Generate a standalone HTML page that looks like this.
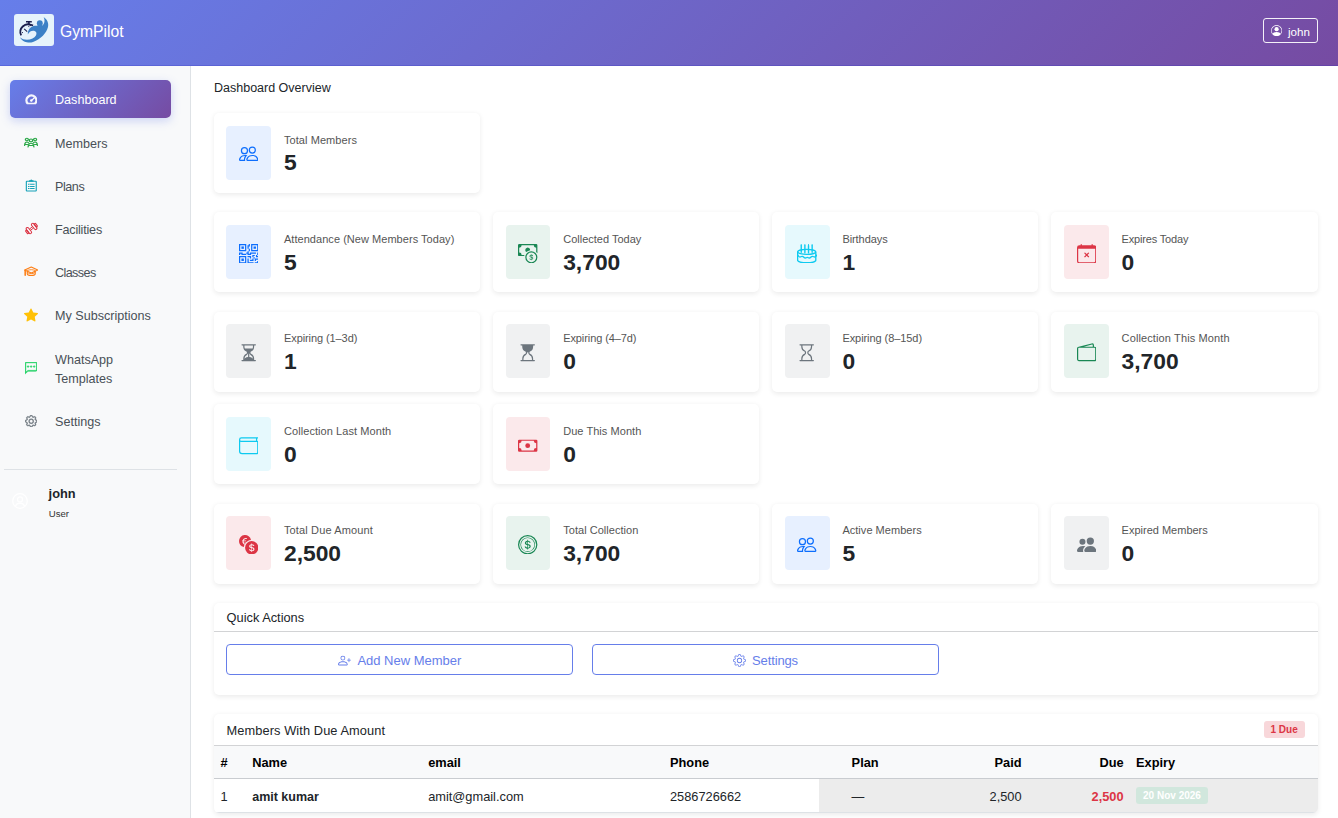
<!DOCTYPE html>
<html lang="en">
<head>
<meta charset="utf-8">
<title>GymPilot</title>
<style>
*{box-sizing:border-box;margin:0;padding:0}
html,body{width:1338px;height:818px;overflow:hidden;background:#fff}
body{font-family:"Liberation Sans",sans-serif;color:#212529;position:relative;font-size:12.8px}
svg{display:block}
.abs{position:absolute}
/* header */
#hdr{position:absolute;left:0;top:0;width:1338px;height:66px;background:linear-gradient(135deg,#667eea 0%,#764ba2 100%);box-shadow:inset 0 -1px 0 rgba(40,40,190,.22)}
#logo{position:absolute;left:14px;top:14px;width:40px;height:32px;border-radius:3px;background:#e6f3fb;overflow:hidden}
#brand{position:absolute;left:60px;top:22px;font-size:15.7px;line-height:20px;color:#fff;white-space:nowrap}
#ubtn{position:absolute;left:1263px;top:18px;width:55px;height:25px;border:1px solid rgba(255,255,255,.92);border-radius:3px;color:#fff}
#ubtn svg{position:absolute;left:7px;top:6px}
#ubtn span{position:absolute;left:24px;top:5.6px;font-size:11.6px;line-height:13px}
/* sidebar */
#side{position:absolute;left:0;top:66px;width:191px;height:752px;background:#f8f9fa;border-right:1px solid #dee2e6}
.nav{position:absolute;left:10px;width:161px;height:38px;border-radius:5px;color:#495057;font-size:12.6px}
.nav svg{position:absolute;left:14.2px;top:12.4px}
.nav span{position:absolute;left:45px;top:12.4px;line-height:16px;white-space:nowrap}
.nav.on{background:linear-gradient(135deg,#667eea 0%,#764ba2 100%);color:#fff;box-shadow:0 3px 10px rgba(102,126,234,.3)}
#sdiv{position:absolute;left:4px;top:469px;width:173px;height:1px;background:#dee2e6}
/* main */
#title{position:absolute;left:214px;top:80px;font-size:12.5px;line-height:16px;white-space:nowrap}
.card{position:absolute;background:#fff;border-radius:5px;box-shadow:0 1.6px 4.8px rgba(0,0,0,.08)}
.stat{width:266.4px;height:80px}
.ib{position:absolute;left:12.8px;top:12.8px;width:44.8px;height:54px;border-radius:4px}
.ib svg{position:absolute;left:12.7px;top:18.5px}
.lb{position:absolute;left:70.4px;top:20px;font-size:11px;line-height:14px;color:#555;white-space:nowrap}
.vl{position:absolute;left:70.4px;top:36.6px;font-size:22.8px;line-height:27px;font-weight:700;color:#212529;white-space:nowrap}
.c1{left:213.6px}.c2{left:492.8px}.c3{left:772px}.c4{left:1051.2px}
.r1{top:113.2px}.r2{top:212.4px}.r3{top:311.6px}.r4{top:404.4px}.r5{top:503.6px}
.bg-b{background:#e7f0ff;color:#0d6efd}
.bg-g{background:#e8f3ee;color:#198754}
.bg-c{background:#e6f9fd;color:#0dcaf0}
.bg-r{background:#fbe9eb;color:#dc3545}
.bg-s{background:#f0f1f2;color:#6c757d}

/* quick actions */
#qa{left:213.6px;top:603.2px;width:1104.4px;height:91.8px}
.ch{position:absolute;left:0;top:0;right:0;height:28.6px;border-bottom:1px solid #d2d3d5;font-size:12.8px;line-height:16px}
.ch span{position:absolute;left:13px;top:7px;white-space:nowrap}
.obtn{position:absolute;top:41px;width:347px;height:31px;border:1px solid #667eea;border-radius:4px;color:#667eea;font-size:13px}
.obtn .in{position:absolute;top:7.7px;height:16px;line-height:16px;white-space:nowrap;display:flex;align-items:center}
/* members due */
#md{left:213.6px;top:714px;width:1104.4px;height:99px;overflow:hidden}
#md .ch{height:31.6px}
#md .ch span{top:9px}
#badge{position:absolute;left:1050px;top:7px;width:41px;height:17px;border-radius:3px;background:#f8d7da;color:#dc3545;font-size:10px;font-weight:700;line-height:17px;text-align:center}
#thead{position:absolute;left:0;top:31.6px;width:100%;height:33px;background:#f8f9fa;border-bottom:1px solid #c9ccd0}
#trow{position:absolute;left:0;top:64.6px;width:100%;height:34px;border-bottom:1px solid #dee2e6}
#trow .gb{position:absolute;left:605px;top:0;right:0;height:33.6px;background:#ececec}
.th,.td{position:absolute;line-height:16px;white-space:nowrap;font-size:12.8px}
.th{top:9px;font-weight:700;color:#000}
.td{top:10.4px}
/* sidebar user */
#su-n{position:absolute;left:48.6px;top:420px;font-size:12.8px;font-weight:700;line-height:16px;color:#212529}
#su-r{position:absolute;left:48.8px;top:442px;font-size:9.6px;line-height:12px;color:#333}
.r1 .vl{top:35.6px}.r3 .lb,.r5 .lb{top:19px}
</style>
</head>
<body>
<div id="hdr">
  <div id="logo"><svg viewBox="0 0 40 32" width="40" height="32"><g fill="none" stroke="#1b1f4d" stroke-linecap="butt"><path d="M7.200 21.300A7.500 7.500 0 0 1 17.600 11.400" stroke-width="1.800"/><path d="M17.200 10.700l1.900.8" stroke-width="1.600"/><path d="M12 7.700h5.800" stroke-width="1.600"/><path d="M14.900 8v2.800" stroke-width="1.600"/><path d="M10.200 14.900l3 2.800" stroke-width="1.100"/><path d="M14.600 12.200l.5.900M8.100 18.400l.9.400" stroke-width="1"/></g><circle cx="25.800" cy="9.300" r="2.950" fill="#3b80c6"/><path fill="#3b80c6" d="M29.600 3C33 5.300 35 9 34 13 32.500 19 27 25 19 28 15 29.300 9 28.500 5.800 23.200 9 26 14 26.500 18.500 24.500 21.500 23 23 20.500 22.300 18.500 21.500 16.300 18 16.200 16.300 17.500 15 18.500 14.300 19.500 13.850 20.500 13.500 18 14.500 15 17 13.200 19 11.800 21 11.500 23 11.700L24.200 11 27.500 11 28.300 11.600C30.500 10 31.300 6.500 29.600 3Z"/></svg></div>
  <div id="brand">GymPilot</div>
  <div id="ubtn"><svg viewBox="0 0 16 16" width="11.2" height="11.2" fill="currentColor"><path d="M11 6a3 3 0 1 1-6 0 3 3 0 0 1 6 0"/><path fill-rule="evenodd" d="M0 8a8 8 0 1 1 16 0A8 8 0 0 1 0 8m8-7a7 7 0 0 0-5.468 11.370C3.242 11.226 4.805 10 8 10s4.757 1.225 5.468 2.370A7 7 0 0 0 8 1"/></svg><span>john</span></div>
</div>
<div id="side">
  <div class="nav on" style="top:14px"><svg viewBox="0 0 16 16" width="12.8" height="12.8" fill="currentColor" style="color:#fff;left:14.6px;top:12.8px"><path fill-rule="evenodd" opacity=".93" d="M2.280 14.200A7.600 7.600 0 1 1 13.720 14.200ZM4.380 12.300A4.700 4.700 0 1 1 11.620 12.300Z"/><circle cx="7.900" cy="9.500" r="1.550"/><path d="M7.900 9.500l3.300-2.900" stroke="currentColor" stroke-width="1.500" stroke-linecap="round"/></svg><span>Dashboard</span></div>
  <div class="nav" style="top:57.2px"><svg viewBox="0 0 16 16" width="14" height="14" fill="currentColor" style="color:#28a745;left:14.0px;top:12.2px"><g transform="translate(0 2.200) scale(1 .8)" fill="none" stroke="currentColor" stroke-width="1.45" stroke-linecap="round" stroke-linejoin="round"><circle cx="3.3" cy="3.6" r="1.700"/><circle cx="12.7" cy="3.6" r="1.700"/><circle cx="8" cy="5" r="1.900"/><path d="M4.700 14.300c.2-3.200 1.400-5.100 3.300-5.100s3.100 1.900 3.300 5.100M6.300 12.200h3.400"/><path d="M.7 12.300c.1-2.900 1-4.900 2.600-4.900 1 0 1.700.6 2.100 1.500M15.300 12.300c-.1-2.900-1-4.900-2.600-4.900-1 0-1.700.6-2.100 1.500M1.600 10.800h2.400M14.400 10.800h-2.400"/></g></svg><span>Members</span></div>
  <div class="nav" style="top:100.4px"><svg viewBox="0 0 16 16" width="12.6" height="12.6" fill="currentColor" style="color:#17a2b8;left:14.7px;top:12.9px"><g fill="none" stroke="currentColor" stroke-width="1.450" stroke-linejoin="miter"><rect x="1.700" y="2.800" width="12.600" height="12.500" rx=".7"/><path d="M5.200 3.600V1.500h1.600a1.250 1.250 0 0 1 2.400 0h1.600v2.100z" fill="currentColor" stroke="none"/><path d="M3.800 6.800h8.400M3.800 9.400h8.400M3.800 12h8.400" stroke-width="1.300"/><path d="M5.900 5.700v7.400" stroke="#f8f9fa" stroke-width=".7"/></g></svg><span style="letter-spacing:-.45px">Plans</span></div>
  <div class="nav" style="top:143.6px"><svg viewBox="0 0 16 16" width="13" height="13" fill="currentColor" style="color:#dc3545;left:14.5px;top:12.7px"><g transform="rotate(-38 8 8)" fill="none" stroke="currentColor" stroke-width="1.300"><rect x=".3" y="5.600" width="1.900" height="4.800" rx=".9"/><rect x="2.200" y="3.600" width="3.300" height="8.800" rx="1.600"/><rect x="10.500" y="3.600" width="3.300" height="8.800" rx="1.600"/><rect x="13.800" y="5.600" width="1.900" height="4.800" rx=".9"/><path d="M5.500 7h5M5.500 9h5" stroke-width="1.100"/></g></svg><span style="letter-spacing:-.2px">Facilities</span></div>
  <div class="nav" style="top:186.8px"><svg viewBox="0 0 16 16" width="14.5" height="14.5" fill="currentColor" style="color:#fd7e14;left:13.8px;top:11.9px"><g fill="none" stroke="currentColor" stroke-width="1.250" stroke-linejoin="round" stroke-linecap="round"><path d="M8 2.200 15.200 5.500 8 8.800.8 5.500z"/><path d="M4 5.900c1.200-.5 2.500-.7 4-.7s2.800.2 4 .7" stroke-width="1"/><path d="M4.200 8.600c1 .7 2.300 1 3.800 1s2.800-.3 3.800-1" stroke-width="1"/><path d="M3.600 7v2.700c0 1.100 2 1.900 4.400 1.900s4.400-.8 4.400-1.900V7"/><path d="M1.300 5.900v5.500" stroke-width="1.700"/></g></svg><span style="letter-spacing:-.6px">Classes</span></div>
  <div class="nav" style="top:230px"><svg viewBox="0 0 16 16" width="14" height="14" fill="currentColor" style="color:#ffc107;left:14.0px;top:12.2px"><path d="M3.612 15.443c-.386.198-.824-.149-.746-.592l.83-4.730L.173 6.765c-.329-.314-.158-.888.283-.950l4.898-.696L7.538.792c.197-.39.730-.39.927 0l2.184 4.327 4.898.696c.441.062.612.636.282.950l-3.522 3.356.83 4.730c.078.443-.36.790-.746.592L8 13.187l-4.389 2.256z"/></svg><span>My Subscriptions</span></div>
  <div class="nav" style="top:273.2px;height:57.6px"><svg viewBox="0 0 16 16" width="12.2" height="12.2" fill="currentColor" stroke="currentColor" stroke-width=".9" stroke-linejoin="round" style="color:#25d366;left:14.9px;top:23.3px"><path d="M14 1a1 1 0 0 1 1 1v8a1 1 0 0 1-1 1H4.414A2 2 0 0 0 3 11.586l-2 2V2a1 1 0 0 1 1-1zM2 0a2 2 0 0 0-2 2v12.793a.5.5 0 0 0 .854.353l2.853-2.853A1 1 0 0 1 4.414 12H14a2 2 0 0 0 2-2V2a2 2 0 0 0-2-2z"/><path d="M5 6a1 1 0 1 1-2 0 1 1 0 0 1 2 0m4 0a1 1 0 1 1-2 0 1 1 0 0 1 2 0m4 0a1 1 0 1 1-2 0 1 1 0 0 1 2 0"/></svg><span style="line-height:19.2px;top:12px">WhatsApp<br>Templates</span></div>
  <div class="nav" style="top:335.6px"><svg viewBox="0 0 16 16" width="12.4" height="12.4" fill="currentColor" stroke="currentColor" stroke-width=".55" style="color:#6c757d;left:14.8px;top:13.0px"><path d="M8 4.754a3.246 3.246 0 1 0 0 6.492 3.246 3.246 0 0 0 0-6.492M5.754 8a2.246 2.246 0 1 1 4.492 0 2.246 2.246 0 0 1-4.492 0"/><path d="M9.796 1.343c-.527-1.790-3.065-1.790-3.592 0l-.094.319a.873.873 0 0 1-1.255.520l-.292-.160c-1.640-.892-3.433.902-2.540 2.541l.159.292a.873.873 0 0 1-.520 1.255l-.319.094c-1.790.527-1.790 3.065 0 3.592l.319.094a.873.873 0 0 1 .520 1.255l-.160.292c-.892 1.640.901 3.434 2.541 2.540l.292-.159a.873.873 0 0 1 1.255.520l.094.319c.527 1.790 3.065 1.790 3.592 0l.094-.319a.873.873 0 0 1 1.255-.520l.292.160c1.640.893 3.434-.902 2.540-2.541l-.159-.292a.873.873 0 0 1 .520-1.255l.319-.094c1.790-.527 1.790-3.065 0-3.592l-.319-.094a.873.873 0 0 1-.520-1.255l.160-.292c.893-1.640-.902-3.433-2.541-2.540l-.292.159a.873.873 0 0 1-1.255-.520zm-2.633.283c.246-.835 1.428-.835 1.674 0l.094.319a1.873 1.873 0 0 0 2.693 1.115l.291-.160c.764-.415 1.600.420 1.184 1.185l-.159.292a1.873 1.873 0 0 0 1.116 2.692l.318.094c.835.246.835 1.428 0 1.674l-.319.094a1.873 1.873 0 0 0-1.115 2.693l.160.291c.415.764-.420 1.600-1.185 1.184l-.291-.159a1.873 1.873 0 0 0-2.693 1.116l-.094.318c-.246.835-1.428.835-1.674 0l-.094-.319a1.873 1.873 0 0 0-2.692-1.115l-.292.160c-.764.415-1.600-.420-1.184-1.185l.159-.291A1.873 1.873 0 0 0 1.945 8.930l-.319-.094c-.835-.246-.835-1.428 0-1.674l.319-.094A1.873 1.873 0 0 0 3.060 4.377l-.160-.292c-.415-.764.420-1.600 1.185-1.184l.292.159a1.873 1.873 0 0 0 2.692-1.115z"/></svg><span>Settings</span></div>
  <div id="sdiv" style="top:403px"></div>
  <div class="abs" style="left:12px;top:427px;color:#fff"><svg viewBox="0 0 16 16" width="16" height="16" fill="none" stroke="currentColor" stroke-width="1.3"><circle cx="8" cy="8" r="7.300"/><circle cx="8" cy="6.400" r="2.500"/><path d="M3.300 13.200c.9-2 2.600-3 4.700-3s3.800 1 4.700 3"/></svg></div>
  <div id="su-n">john</div>
  <div id="su-r">User</div>
</div>
<div id="title">Dashboard Overview</div>

<div class="card stat c1 r1"><div class="ib bg-b"><svg viewBox="0 0 16 16" width="19.4" height="19.4" fill="currentColor"><path d="M15 14s1 0 1-1-1-4-5-4-5 3-5 4 1 1 1 1zm-7.978-1L7 12.996c.001-.264.167-1.03.76-1.72C8.312 10.629 9.282 10 11 10c1.717 0 2.687.63 3.24 1.276.593.69.758 1.457.76 1.72l-.008.002-.014.002zM11 7a2 2 0 1 0 0-4 2 2 0 0 0 0 4m3-2a3 3 0 1 1-6 0 3 3 0 0 1 6 0M6.936 9.28a6 6 0 0 0-1.23-.247A7 7 0 0 0 5 9c-4 0-5 3-5 4q0 1 1 1h4.216A2.24 2.24 0 0 1 5 13c0-1.01.377-2.042 1.09-2.904.243-.294.526-.569.846-.816M4.92 10A5.5 5.5 0 0 0 4 13H1c0-.26.164-1.03.76-1.724.545-.636 1.492-1.256 3.16-1.275ZM1.5 5.5a3 3 0 1 1 6 0 3 3 0 0 1-6 0m3-2a2 2 0 1 0 0 4 2 2 0 0 0 0-4"/></svg></div><div class="lb" style="letter-spacing:0.07px">Total Members</div><div class="vl">5</div></div>

<div class="card stat c1 r2"><div class="ib bg-b"><svg viewBox="0 0 16 16" width="19.4" height="19.4" fill="currentColor"><path d="M2 2h2v2H2z"/><path d="M6 0v6H0V0zM5 1H1v4h4zM4 12H2v2h2z"/><path d="M6 10v6H0v-6zm-5 1v4h4v-4zm11-9h2v2h-2z"/><path d="M10 0v6h6V0zm5 1v4h-4V1zM8 1V0h1v2H8v2H7V1zm0 5V4h1v2zM6 8V7h1V6h1v2h1V7h5v1h-4v1H7V8zm0 0v1H2V8H1v1H0V7h3v1zm10 1h-1V7h1zm-1 0h-1v2h2v-1h-1zm-4 0h2v1h-1v1h-1zm2 3v-1h-1v1h-1v1H9v1h3v-2zm0 0h3v1h-2v1h-1zm-4-1v1h1v-2H7v1z"/><path d="M7 12h1v3h4v1H7zm9 2v2h-3v-1h2v-1z"/></svg></div><div class="lb" style="letter-spacing:0.04px">Attendance (New Members Today)</div><div class="vl">5</div></div>
<div class="card stat c2 r2"><div class="ib bg-g"><svg viewBox="0 0 16 16" width="19.4" height="19.4" fill="currentColor"><path fill-rule="evenodd" d="M11 15a4 4 0 1 0 0-8 4 4 0 0 0 0 8m5-4a5 5 0 1 1-10 0 5 5 0 0 1 10 0"/><path d="M9.438 11.944c.047.596.518 1.06 1.363 1.116v.44h.375v-.443c.875-.061 1.386-.529 1.386-1.207 0-.618-.39-.936-1.09-1.1l-.296-.07v-1.2c.376.043.614.248.671.532h.658c-.047-.575-.54-1.024-1.329-1.073V8.5h-.375v.45c-.747.073-1.255.522-1.255 1.158 0 .562.378.92 1.007 1.066l.248.061v1.272c-.384-.058-.639-.27-.696-.563h-.668zm1.36-1.354c-.369-.085-.569-.26-.569-.522 0-.294.216-.514.572-.578v1.1zm.432.746c.449.104.655.272.655.569 0 .339-.257.571-.709.614v-1.195z"/><path d="M1 0a1 1 0 0 0-1 1v8a1 1 0 0 0 1 1h4.083q.088-.517.258-1H3a2 2 0 0 0-2-2V3a2 2 0 0 0 2-2h10a2 2 0 0 0 2 2v3.528c.38.34.717.728 1 1.154V1a1 1 0 0 0-1-1z"/><path d="M9.998 5.083 10 5a2 2 0 1 0-3.132 1.65 6 6 0 0 1 3.13-1.567"/></svg></div><div class="lb">Collected Today</div><div class="vl">3,700</div></div>
<div class="card stat c3 r2"><div class="ib bg-c"><svg viewBox="0 0 16 16" width="19.4" height="19.4" fill="currentColor"><g fill="none" stroke="currentColor" stroke-width="1.100" stroke-linecap="round"><path d="M3.500 1.300v5.600M6.500 1.300v6M9.500 1.300v6M12.500 1.300v5.600" stroke-width="1.150"/><path d="M3.500 .3v1M6.500 .3v1M9.500 .3v1M12.500 .3v1" stroke-width=".7"/><ellipse cx="8" cy="6.500" rx="7.400" ry="2"/><path d="M.5 6.500v7c0 1.100 3.400 2 7.500 2s7.500-.9 7.500-2v-7"/><path d="M.5 9.100l.9 1.100c.5.500 1.200.600 1.800.3.800-.4 1.700-.3 2.300.3l.3.300c.5.500 1.300.600 1.900.200a1.500 1.500 0 0 1 1.600 0c.6.400 1.400.300 1.900-.2l.3-.3c.6-.6 1.500-.7 2.300-.3.600.3 1.300.2 1.800-.3l.9-1.100"/></g></svg></div><div class="lb" style="letter-spacing:-0.07px">Birthdays</div><div class="vl">1</div></div>
<div class="card stat c4 r2"><div class="ib bg-r"><svg viewBox="0 0 16 16" width="19.4" height="19.4" fill="currentColor"><path d="M6.146 7.146a.5.5 0 0 1 .708 0L8 8.293l1.146-1.147a.5.5 0 1 1 .708.708L8.707 9l1.147 1.146a.5.5 0 0 1-.708.708L8 9.707l-1.146 1.147a.5.5 0 0 1-.708-.708L7.293 9 6.146 7.854a.5.5 0 0 1 0-.708"/><path d="M3.5 0a.5.5 0 0 1 .5.5V1h8V.5a.5.5 0 0 1 1 0V1h1a2 2 0 0 1 2 2v11a2 2 0 0 1-2 2H2a2 2 0 0 1-2-2V3a2 2 0 0 1 2-2h1V.5a.5.5 0 0 1 .5-.5M1 4v10a1 1 0 0 0 1 1h12a1 1 0 0 0 1-1V4z"/></svg></div><div class="lb" style="letter-spacing:-0.17px">Expires Today</div><div class="vl">0</div></div>

<div class="card stat c1 r3"><div class="ib bg-s"><svg viewBox="0 0 16 16" width="19.4" height="19.4" fill="currentColor"><path d="M2.5 15a.5.5 0 1 1 0-1h1v-1a4.5 4.5 0 0 1 2.557-4.06c.29-.139.443-.377.443-.59v-.7c0-.213-.154-.451-.443-.59A4.5 4.5 0 0 1 3.5 3V2h-1a.5.5 0 0 1 0-1h11a.5.5 0 0 1 0 1h-1v1a4.5 4.5 0 0 1-2.557 4.06c-.29.139-.443.377-.443.59v.7c0 .213.154.451.443.59A4.5 4.5 0 0 1 12.5 13v1h1a.5.5 0 0 1 0 1zm2-13v1c0 .537.12 1.045.337 1.5h6.326c.216-.455.337-.963.337-1.5V2zm3 6.35c0 .701-.478 1.236-1.011 1.492A3.5 3.5 0 0 0 4.5 13s.866-1.299 3-1.48zm1 0v3.17c2.134.181 3 1.48 3 1.48a3.5 3.5 0 0 0-1.989-3.158C8.978 9.586 8.5 9.052 8.5 8.351z"/></svg></div><div class="lb" style="letter-spacing:-0.09px">Expiring (1–3d)</div><div class="vl">1</div></div>
<div class="card stat c2 r3"><div class="ib bg-s"><svg viewBox="0 0 16 16" width="19.4" height="19.4" fill="currentColor"><path d="M2 14.5a.5.5 0 0 0 .5.5h11a.5.5 0 1 0 0-1h-1v-1a4.5 4.5 0 0 0-2.557-4.06c-.29-.139-.443-.377-.443-.59v-.7c0-.213.154-.451.443-.59A4.5 4.5 0 0 0 12.5 3V2h1a.5.5 0 0 0 0-1h-11a.5.5 0 0 0 0 1h1v1a4.5 4.5 0 0 0 2.557 4.06c.29.139.443.377.443.59v.7c0 .213-.154.451-.443.59A4.5 4.5 0 0 0 3.5 13v1h-1a.5.5 0 0 0-.5.5m2.500-.5v-1a3.500 3.500 0 0 1 1.989-3.158c.533-.256 1.011-.79 1.011-1.491v-.702s.18.101.5.101.5-.1.500-.1v.7c0 .701.478 1.236 1.011 1.492A3.500 3.500 0 0 1 11.500 13v1z"/></svg></div><div class="lb" style="letter-spacing:-0.09px">Expiring (4–7d)</div><div class="vl">0</div></div>
<div class="card stat c3 r3"><div class="ib bg-s"><svg viewBox="0 0 16 16" width="19.4" height="19.4" fill="currentColor"><path d="M2 1.5a.5.5 0 0 1 .5-.5h11a.5.5 0 0 1 0 1h-1v1a4.5 4.5 0 0 1-2.557 4.06c-.29.139-.443.377-.443.59v.7c0 .213.154.451.443.59A4.5 4.5 0 0 1 12.5 13v1h1a.5.5 0 0 1 0 1h-11a.5.5 0 1 1 0-1h1v-1a4.5 4.5 0 0 1 2.557-4.06c.29-.139.443-.377.443-.59v-.7c0-.213-.154-.451-.443-.59A4.5 4.5 0 0 1 3.5 3V2h-1a.5.5 0 0 1-.5-.5m2.500.5v1a3.500 3.500 0 0 0 1.989 3.158c.533.256 1.011.791 1.011 1.491v.702c0 .7-.478 1.235-1.011 1.491A3.500 3.500 0 0 0 4.500 13v1h7v-1a3.500 3.500 0 0 0-1.989-3.158C8.978 9.586 8.500 9.052 8.500 8.351v-.702c0-.7.478-1.235 1.011-1.491A3.500 3.500 0 0 0 11.500 3V2z"/></svg></div><div class="lb" style="letter-spacing:-0.07px">Expiring (8–15d)</div><div class="vl">0</div></div>
<div class="card stat c4 r3"><div class="ib bg-g"><svg viewBox="0 0 16 16" width="19.4" height="19.4" fill="currentColor"><path d="M12.136.326A1.500 1.500 0 0 1 14 1.780V3h.500A1.500 1.500 0 0 1 16 4.500v9a1.500 1.500 0 0 1-1.500 1.500h-13A1.500 1.500 0 0 1 0 13.500v-9a1.500 1.500 0 0 1 1.432-1.499zM5.562 3H13V1.780a.5.5 0 0 0-.621-.484zM1.500 4a.5.5 0 0 0-.5.5v9a.5.5 0 0 0 .5.5h13a.5.5 0 0 0 .5-.5v-9a.5.5 0 0 0-.5-.5z"/></svg></div><div class="lb" style="letter-spacing:0.12px">Collection This Month</div><div class="vl">3,700</div></div>

<div class="card stat c1 r4"><div class="ib bg-c"><svg viewBox="0 0 16 16" width="19.4" height="19.4" fill="currentColor"><path d="M0 3a2 2 0 0 1 2-2h13.500a.5.5 0 0 1 0 1H15v2a1 1 0 0 1 1 1v8.500a1.500 1.500 0 0 1-1.500 1.500h-12A2.500 2.500 0 0 1 0 12.500zm1 1.732V12.500A1.500 1.500 0 0 0 2.500 14h12a.5.5 0 0 0 .5-.5V5H2a2 2 0 0 1-1-.268M1 3a1 1 0 0 0 1 1h12V2H2a1 1 0 0 0-1 1"/></svg></div><div class="lb" style="letter-spacing:0.07px">Collection Last Month</div><div class="vl">0</div></div>
<div class="card stat c2 r4"><div class="ib bg-r"><svg viewBox="0 0 16 16" width="19.4" height="19.4" fill="currentColor"><path d="M8 10a2 2 0 1 0 0-4 2 2 0 0 0 0 4"/><path d="M0 4a1 1 0 0 1 1-1h14a1 1 0 0 1 1 1v8a1 1 0 0 1-1 1H1a1 1 0 0 1-1-1zm3 0a2 2 0 0 1-2 2v4a2 2 0 0 1 2 2h10a2 2 0 0 1 2-2V6a2 2 0 0 1-2-2z"/></svg></div><div class="lb" style="letter-spacing:0.05px">Due This Month</div><div class="vl">0</div></div>

<div class="card stat c1 r5"><div class="ib bg-r"><svg viewBox="0 0 16 16" width="19.4" height="19.4" fill="currentColor"><path d="M0 5a5.002 5.002 0 0 0 4.027 4.905 6.460 6.460 0 0 1 .544-2.073C3.695 7.536 3.132 6.864 3 5.910h-.5v-.426h.466V5.050c0-.046 0-.093.004-.135H2.500v-.427h.511C3.236 3.240 4.213 2.500 5.681 2.500c.316 0 .59.031.819.085v.733a3.460 3.460 0 0 0-.815-.082c-.919 0-1.538.466-1.734 1.252h1.917v.427h-1.980c-.003.046-.003.097-.003.147v.422h1.983v.427H3.930c.118.602.468 1.030 1.005 1.229a6.500 6.500 0 0 1 4.970-3.113A5.002 5.002 0 0 0 0 5m16 5.500a5.500 5.500 0 1 1-11 0 5.500 5.500 0 0 1 11 0m-7.750 1.322c.069.835.746 1.485 1.964 1.562V14h.54v-.62c1.259-.086 1.996-.74 1.996-1.690 0-.865-.563-1.310-1.570-1.540l-.426-.1V8.374c.54.06.884.347.966.745h.948c-.07-.804-.779-1.433-1.914-1.502V7h-.54v.63c-1.076.103-1.808.732-1.808 1.622 0 .787.544 1.288 1.450 1.493l.358.085v1.780c-.554-.08-.92-.376-1.003-.787zm1.960-1.895c-.532-.12-.82-.364-.82-.732 0-.41.311-.719.824-.809v1.540h-.005zm.622 1.044c.645.145.943.38.943.796 0 .474-.372.8-1.025.86v-1.674z"/></svg></div><div class="lb" style="letter-spacing:0.13px">Total Due Amount</div><div class="vl">2,500</div></div>
<div class="card stat c2 r5"><div class="ib bg-g"><svg viewBox="0 0 16 16" width="19.4" height="19.4" fill="currentColor"><path d="M5.5 9.511c.076.954.83 1.697 2.182 1.785V12h.6v-.709c1.400-.098 2.218-.846 2.218-1.932 0-.987-.626-1.496-1.745-1.760l-.473-.112V5.570c.6.068.982.396 1.074.85h1.052c-.076-.919-.864-1.638-2.126-1.716V4h-.6v.719c-1.195.117-2.010.836-2.010 1.853 0 .9.606 1.472 1.613 1.707l.397.098v2.034c-.615-.093-1.022-.43-1.114-.9zm2.177-2.166c-.59-.137-.91-.416-.91-.836 0-.47.345-.822.915-.925v1.760h-.005zm.692 1.193c.717.166 1.048.435 1.048.91 0 .542-.412.914-1.135.982V8.518z"/><path d="M8 15A7 7 0 1 1 8 1a7 7 0 0 1 0 14m0 1A8 8 0 1 0 8 0a8 8 0 0 0 0 16"/><path d="M8 13.5a5.500 5.500 0 1 1 0-11 5.500 5.500 0 0 1 0 11m0 .5A6 6 0 1 0 8 2a6 6 0 0 0 0 12"/></svg></div><div class="lb" style="letter-spacing:0.04px">Total Collection</div><div class="vl">3,700</div></div>
<div class="card stat c3 r5"><div class="ib bg-b"><svg viewBox="0 0 16 16" width="19.4" height="19.4" fill="currentColor"><path d="M15 14s1 0 1-1-1-4-5-4-5 3-5 4 1 1 1 1zm-7.978-1L7 12.996c.001-.264.167-1.03.76-1.72C8.312 10.629 9.282 10 11 10c1.717 0 2.687.63 3.24 1.276.593.69.758 1.457.76 1.72l-.008.002-.014.002zM11 7a2 2 0 1 0 0-4 2 2 0 0 0 0 4m3-2a3 3 0 1 1-6 0 3 3 0 0 1 6 0M6.936 9.28a6 6 0 0 0-1.23-.247A7 7 0 0 0 5 9c-4 0-5 3-5 4q0 1 1 1h4.216A2.24 2.24 0 0 1 5 13c0-1.01.377-2.042 1.09-2.904.243-.294.526-.569.846-.816M4.92 10A5.5 5.5 0 0 0 4 13H1c0-.26.164-1.03.76-1.724.545-.636 1.492-1.256 3.16-1.275ZM1.5 5.5a3 3 0 1 1 6 0 3 3 0 0 1-6 0m3-2a2 2 0 1 0 0 4 2 2 0 0 0 0-4"/></svg></div><div class="lb" style="letter-spacing:0.03px">Active Members</div><div class="vl">5</div></div>
<div class="card stat c4 r5"><div class="ib bg-s"><svg viewBox="0 0 16 16" width="19.4" height="19.4" fill="currentColor"><path d="M7 14s-1 0-1-1 1-4 5-4 5 3 5 4-1 1-1 1zm4-6a3 3 0 1 0 0-6 3 3 0 0 0 0 6m-5.784 6A2.24 2.24 0 0 1 5 13c0-1.355.68-2.75 1.936-3.72A6.3 6.3 0 0 0 5 9c-4 0-5 3-5 4s1 1 1 1zM4.5 8a2.5 2.5 0 1 0 0-5 2.5 2.5 0 0 0 0 5"/></svg></div><div class="lb">Expired Members</div><div class="vl">0</div></div>

<div class="card" id="qa">
  <div class="ch"><span>Quick Actions</span></div>
  <div class="obtn" style="left:12.6px"><div class="in" style="left:111px"><svg viewBox="0 0 16 16" width="13" height="13" fill="currentColor" style="position:absolute;left:0;top:1px"><path d="M6 8a3 3 0 1 0 0-6 3 3 0 0 0 0 6m2-3a2 2 0 1 1-4 0 2 2 0 0 1 4 0m4 8c0 1-1 1-1 1H1s-1 0-1-1 1-4 6-4 6 3 6 4m-1-.004c-.001-.246-.154-.986-.832-1.664C9.516 10.680 8.289 10 6 10s-3.516.680-4.168 1.332c-.678.678-.83 1.418-.832 1.664z"/><path fill-rule="evenodd" d="M13.5 5a.5.5 0 0 1 .5.5V7h1.500a.5.5 0 0 1 0 1H14v1.500a.5.5 0 0 1-1 0V8h-1.500a.5.5 0 0 1 0-1H13V5.500a.5.5 0 0 1 .5-.5"/></svg><span style="margin-left:19.2px">Add New Member</span></div></div>
  <div class="obtn" style="left:378.6px"><div class="in" style="left:140px"><svg viewBox="0 0 16 16" width="13" height="13" fill="currentColor" style="position:absolute;left:0;top:1px"><path d="M8 4.754a3.246 3.246 0 1 0 0 6.492 3.246 3.246 0 0 0 0-6.492M5.754 8a2.246 2.246 0 1 1 4.492 0 2.246 2.246 0 0 1-4.492 0"/><path d="M9.796 1.343c-.527-1.790-3.065-1.790-3.592 0l-.094.319a.873.873 0 0 1-1.255.520l-.292-.160c-1.640-.892-3.433.902-2.540 2.541l.159.292a.873.873 0 0 1-.520 1.255l-.319.094c-1.790.527-1.790 3.065 0 3.592l.319.094a.873.873 0 0 1 .520 1.255l-.160.292c-.892 1.640.901 3.434 2.541 2.540l.292-.159a.873.873 0 0 1 1.255.520l.094.319c.527 1.790 3.065 1.790 3.592 0l.094-.319a.873.873 0 0 1 1.255-.520l.292.160c1.640.893 3.434-.902 2.540-2.541l-.159-.292a.873.873 0 0 1 .520-1.255l.319-.094c1.790-.527 1.790-3.065 0-3.592l-.319-.094a.873.873 0 0 1-.520-1.255l.160-.292c.893-1.640-.902-3.433-2.541-2.540l-.292.159a.873.873 0 0 1-1.255-.520zm-2.633.283c.246-.835 1.428-.835 1.674 0l.094.319a1.873 1.873 0 0 0 2.693 1.115l.291-.160c.764-.415 1.600.420 1.184 1.185l-.159.292a1.873 1.873 0 0 0 1.116 2.692l.318.094c.835.246.835 1.428 0 1.674l-.319.094a1.873 1.873 0 0 0-1.115 2.693l.160.291c.415.764-.420 1.600-1.185 1.184l-.291-.159a1.873 1.873 0 0 0-2.693 1.116l-.094.318c-.246.835-1.428.835-1.674 0l-.094-.319a1.873 1.873 0 0 0-2.692-1.115l-.292.160c-.764.415-1.600-.420-1.184-1.185l.159-.291A1.873 1.873 0 0 0 1.945 8.930l-.319-.094c-.835-.246-.835-1.428 0-1.674l.319-.094A1.873 1.873 0 0 0 3.060 4.377l-.160-.292c-.415-.764.420-1.600 1.185-1.184l.292.159a1.873 1.873 0 0 0 2.692-1.115z"/></svg><span style="margin-left:18.8px;letter-spacing:-.12px">Settings</span></div></div>
</div>

<div class="card" id="md">
  <div class="ch"><span style="letter-spacing:.09px">Members With Due Amount</span><div id="badge">1 Due</div></div>
  <div id="thead">
    <div class="th" style="left:7px">#</div>
    <div class="th" style="left:38.6px">Name</div>
    <div class="th" style="left:214.6px">email</div>
    <div class="th" style="left:456.4px">Phone</div>
    <div class="th" style="left:638px">Plan</div>
    <div class="th" style="right:296.4px">Paid</div>
    <div class="th" style="right:194.4px">Due</div>
    <div class="th" style="left:922.4px">Expiry</div>
  </div>
  <div id="trow">
    <div class="gb"></div>
    <div class="td" style="left:7px">1</div>
    <div class="td" style="left:38.6px;font-weight:700;font-size:12.5px">amit kumar</div>
    <div class="td" style="left:214.6px">amit@gmail.com</div>
    <div class="td" style="left:456.4px">2586726662</div>
    <div class="td" style="left:638px">—</div>
    <div class="td" style="right:296.4px">2,500</div>
    <div class="td" style="right:194.4px;font-weight:700;color:#dc3545">2,500</div>
    <div class="abs" style="left:922.4px;top:8.4px;width:72px;height:17px;border-radius:3px;background:#d1e7dd;color:#fff;font-size:10px;font-weight:700;line-height:17px;text-align:center">20 Nov 2026</div>
  </div>
</div>

</body>
</html>
